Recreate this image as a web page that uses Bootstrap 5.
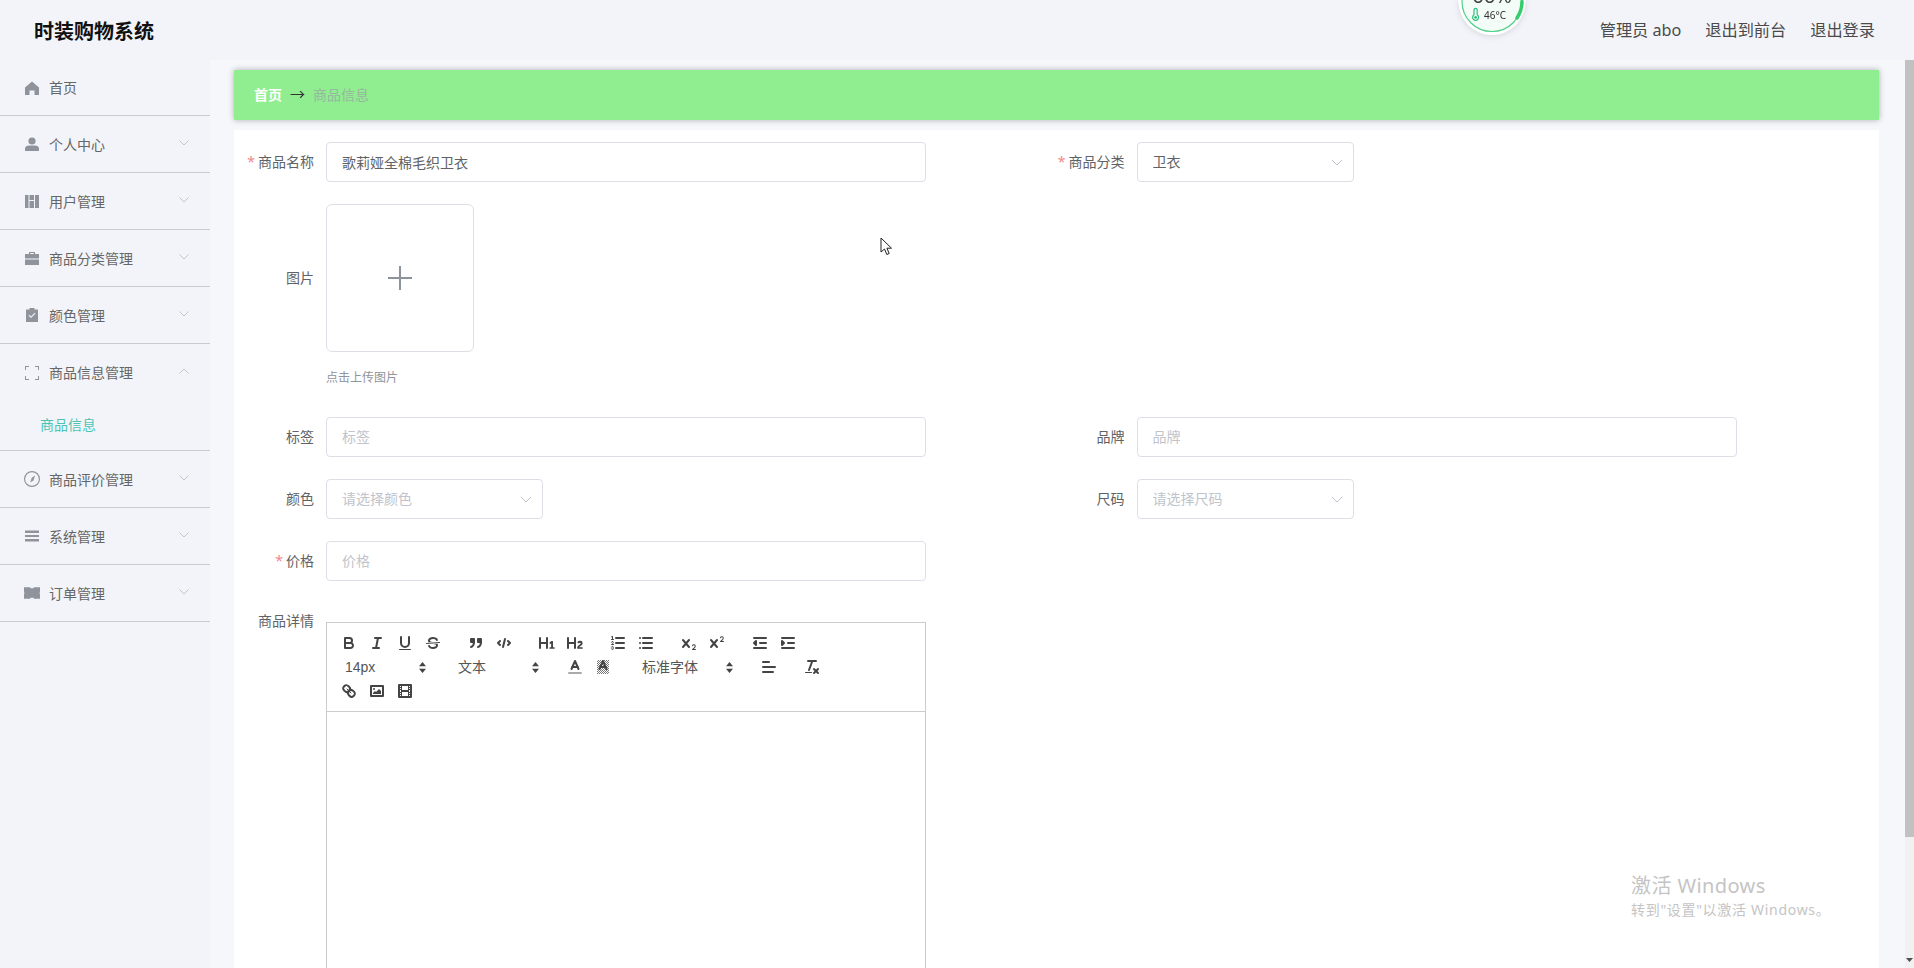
<!DOCTYPE html>
<html lang="zh-CN">
<head>
  <meta charset="UTF-8" />
  <title>时装购物系统</title>
  <link href="https://cdn.jsdelivr.net/npm/bootstrap@5.3.0/dist/css/bootstrap.min.css" rel="stylesheet" />
  <style>
    html, body { height: 100%; overflow: hidden; }
    body { font-family: "Noto Sans", "Noto Sans CJK SC", sans-serif; font-size: 14px; color: #606266; background: #f3f4f9; }

    .top-bar { height: 60px; padding-left: 34px; padding-right: 39px; background: #f3f4f9; }
    .brand-name { font-size: 20px; font-weight: 700; color: #111; padding-top: 3px; }
    .top-links { gap: 24px; font-size: 16.2px; color: #4a4a4a; }
    .temp-widget { position: absolute; left: 1457px; top: 0; width: 70px; height: 40px; filter: drop-shadow(0 1px 3px rgba(0,0,0,.12)); }

    .shell { height: calc(100vh - 60px); }
    .side-menu { width: 210px; flex: none; }
    .menu-row { height: 57px; padding: 0 21px 0 25px; border-bottom: 1px solid #c9cbd0; color: #666; }
    .menu-row.first-row { height: 56px; }
    .menu-row.open-row { height: 107px; padding: 0; display: block; }
    .open-head { height: 57px; padding: 0 21px 0 25px; }
    .sub-row { height: 49px; padding-left: 40px; padding-bottom: 2px; color: #4cc4b4; }
    .menu-icon { width: 14px; height: 14px; margin-right: 10px; fill: #8f939b; flex: none; }
    .wide-icon { width: 16px; height: 16px; margin-left: -1px; margin-right: 9px; }
    .menu-caret { width: 10px; height: 6px; margin-left: auto; margin-top: -3px; fill: none; stroke: #c0c4cc; stroke-width: 1; }

    .main-pane { overflow: hidden; padding: 10px 26px 10px 24px; background: #f5f7fb; min-width: 0; }
    .page-scroll { width: 9px; flex: none; background: #f1f1f1; }
    .page-scroll-thumb { height: 777px; background: #c1c1c1; }
    .page-scroll-down { width: 7px; height: 4px; margin-bottom: 6px; fill: #505050; }

    .crumb-bar { height: 50px; padding-left: 20px; padding-bottom: 2px; gap: 8px; background: #90ee90; box-shadow: 0 0 6px rgba(0,0,0,.3); margin-bottom: 10px; }
    .crumb-home { color: #fff; font-weight: 700; }
    .crumb-arrow { color: #303133; font-size: 15px; line-height: 1; }
    .crumb-here { color: #96b89e; }

    .form-panel { background: #fff; padding: 12px; }
    .field-row { margin-bottom: 22px; }
    .field-line { display: flex; }
    .field-label { width: 80px; flex: none; padding-right: 12px; text-align: right; line-height: 40px; color: #606266; }
    .req-star { color: #f08a8a; margin-right: 3px; }
    .field-input, .field-select { height: 40px; font-size: 14px; color: #606266; border: 1px solid #dcdfe6; border-radius: 4px; padding: 0 15px 1px; }
    .field-input { width: 600px; }
    .field-select {
      width: 217px;
      background-position: right 10px center;
      background-size: 12px 12px;
      background-image: url("data:image/svg+xml,%3csvg xmlns='http://www.w3.org/2000/svg' viewBox='0 0 12 12'%3e%3cpath d='M1 4l5 5 5-5' fill='none' stroke='%23c0c4cc'/%3e%3c/svg%3e");
    }
    .field-input::placeholder { color: #c0c4cc; }
    .select-empty { color: #c0c4cc; }

    .upload-label { line-height: 148px; }
    .upload-box { width: 148px; height: 148px; border: 1px solid #dcdfe6; border-radius: 6px; }
    .upload-box svg { width: 24px; height: 24px; stroke: #8c939d; stroke-width: 2; }
    .upload-hint { font-size: 12px; line-height: 20px; color: #8f939b; margin-top: 16px; margin-bottom: 29px; }

    .detail-label { line-height: 36px; }
    .editor-wrap { width: 600px; margin-top: 19px; }
    .editor-bar { border: 1px solid #ccc; padding: 8px; line-height: 0; }
    .editor-group { display: inline-flex; margin-right: 15px; vertical-align: top; }
    .editor-btn { width: 28px; height: 24px; padding: 3px 5px; border: 0; background: none; display: block; }
    .editor-btn svg { display: block; width: 18px; height: 18px; }
    .editor-bar line, .editor-bar path.ln, .editor-bar polyline, .editor-bar rect.ln { fill: none; stroke: #444; stroke-width: 2; stroke-linecap: round; stroke-linejoin: round; }
    .editor-bar .fl { fill: #444; }
    .editor-bar .thin { stroke-width: 1 !important; }
    .editor-bar polyline.ff, .editor-bar rect.ff { fill: #444; }
    .editor-bar path.ff { fill: none; }
    .editor-bar .color-mark { stroke: #aaa; }
    .editor-pick { width: 98px; height: 24px; padding-left: 10px; padding-right: 7px; font-family: "Liberation Sans", "Noto Sans CJK SC", sans-serif; font-size: 14px; line-height: 24px; color: #555; }
    .editor-pick.wide-pick { width: 108px; }
    .editor-pick svg { width: 7px; height: 11px; fill: #444; }
    .editor-body { border: 1px solid #ccc; border-top: 0; height: 400px; }

    .os-mark { position: absolute; left: 1631px; top: 872px; color: #c4c4c4; pointer-events: none; }
    .os-mark-big { font-size: 20px; line-height: 28px; letter-spacing: .4px; }
    .os-mark-small { font-size: 14px; line-height: 20px; letter-spacing: .7px; }
    .mouse-arrow { position: absolute; left: 880px; top: 237px; width: 14px; height: 19px; }
  </style>
</head>
<body>
  <!-- Header -->
  <header class="top-bar d-flex align-items-center justify-content-between">
    <div class="brand-name">时装购物系统</div>
    <div class="top-links d-flex">
      <span>管理员 abo</span>
      <span>退出到前台</span>
      <span>退出登录</span>
    </div>
  </header>

  <svg class="temp-widget" viewBox="0 0 70 40">
    <circle cx="35" cy="1.5" r="33.5" fill="#fff"/>
    <circle cx="35" cy="1.5" r="30" fill="#f4fcf7" stroke="#4fd08a" stroke-width="1.2"/>
    <path d="M65 1.5A30 30 0 0 1 60 18" fill="none" stroke="#35cd6c" stroke-width="3.5" stroke-linecap="round"/>
    <text x="35" y="3" text-anchor="middle" font-family="Noto Sans, sans-serif" font-size="20" fill="#444">66%</text>
    <path d="M17 10a1.600 1.600 0 0 1 3.200 0v4.800a3 3 0 1 1-3.200 0z" fill="none" stroke="#2fbf7f" stroke-width="1.200"/>
    <circle cx="18.600" cy="17.400" r="1.400" fill="#2fbf7f"/>
    <text x="27" y="19" font-family="Noto Sans, sans-serif" font-size="10" fill="#333">46°C</text>
  </svg>

  <div class="shell d-flex">
    <!-- Sidebar -->
    <aside class="side-menu">
      <div class="menu-row first-row d-flex align-items-center">
        <svg class="menu-icon" viewBox="0 0 14 14"><path d="M7 .5L0 6.500V14h4.500V9.500h5V14H14V6.500z"/></svg>
        首页
      </div>
      <div class="menu-row d-flex align-items-center">
        <svg class="menu-icon" viewBox="0 0 14 14"><circle cx="7" cy="4" r="3.600"/><path d="M0 14v-2.500C0 9.500 2 8.500 4 8.500h6c2 0 4 1 4 3V14z"/></svg>
        个人中心
        <svg class="menu-caret" viewBox="0 0 10 6"><path d="M.5.500L5 5 9.500.5"/></svg>
      </div>
      <div class="menu-row d-flex align-items-center">
        <svg class="menu-icon" viewBox="0 0 14 14"><path d="M0 1h3.500v13H0zM4.500 7H9v7H4.500zM4.500 1H9v5H4.500zM10 1h4v13h-4z"/></svg>
        用户管理
        <svg class="menu-caret" viewBox="0 0 10 6"><path d="M.5.500L5 5 9.500.5"/></svg>
      </div>
      <div class="menu-row d-flex align-items-center">
        <svg class="menu-icon" viewBox="0 0 14 14"><path d="M4 3V1h6v2h4v4.500H0V3zM5.200 3h3.600V2H5.200zM0 8.500h14V14H0z"/></svg>
        商品分类管理
        <svg class="menu-caret" viewBox="0 0 10 6"><path d="M.5.500L5 5 9.500.5"/></svg>
      </div>
      <div class="menu-row d-flex align-items-center">
        <svg class="menu-icon" viewBox="0 0 14 14"><path fill-rule="evenodd" d="M4.500 0h5v1.500H13V14H1V1.500h3.500zM3.500 7.500L6 10l4.500-4.500-.8-.8L6 8.400 4.300 6.700z"/></svg>
        颜色管理
        <svg class="menu-caret" viewBox="0 0 10 6"><path d="M.5.500L5 5 9.500.5"/></svg>
      </div>
      <div class="menu-row open-row">
        <div class="open-head d-flex align-items-center">
          <svg class="menu-icon" viewBox="0 0 14 14"><path d="M0 0h4v1H1v3H0zM10 0h4v4h-1V1h-3zM0 10h1v3h3v1H0zM13 10h1v4h-4v-1h3z"/></svg>
          商品信息管理
          <svg class="menu-caret" viewBox="0 0 10 6"><path d="M.5 5.500L5 1l4.500 4.500"/></svg>
        </div>
        <div class="sub-row d-flex align-items-center">商品信息</div>
      </div>
      <div class="menu-row d-flex align-items-center">
        <svg class="menu-icon wide-icon" viewBox="0 0 14 14"><path fill-rule="evenodd" d="M7 0a7 7 0 1 1 0 14A7 7 0 0 1 7 0zm0 1a6 6 0 1 0 0 12A6 6 0 0 0 7 1zM9.600 4L8.300 8.300 5.600 9.900 5.500 9.700 6.800 6z"/></svg>
        商品评价管理
        <svg class="menu-caret" viewBox="0 0 10 6"><path d="M.5.500L5 5 9.500.5"/></svg>
      </div>
      <div class="menu-row d-flex align-items-center">
        <svg class="menu-icon" viewBox="0 0 14 14"><path d="M0 1.500h14v2.500H0zM0 6h14v2H0zM0 10h14v2.500H0z"/></svg>
        系统管理
        <svg class="menu-caret" viewBox="0 0 10 6"><path d="M.5.500L5 5 9.500.5"/></svg>
      </div>
      <div class="menu-row d-flex align-items-center">
        <svg class="menu-icon wide-icon" viewBox="0 0 14 14"><path d="M0 2h5.500v.8h3V2H14v3.600a3 3 0 0 0 0 2.800V12H8.500v-.8h-3v.8H0V8.400a3 3 0 0 0 0-2.800z"/></svg>
        订单管理
        <svg class="menu-caret" viewBox="0 0 10 6"><path d="M.5.500L5 5 9.500.5"/></svg>
      </div>
    </aside>

    <!-- Main -->
    <main class="main-pane flex-fill">
      <div class="crumb-bar d-flex align-items-center">
        <span class="crumb-home">首页</span>
        <span class="crumb-arrow">→</span>
        <span class="crumb-here">商品信息</span>
      </div>

      <form class="form-panel">
        <div class="row g-0 field-row">
          <div class="col-6 field-line">
            <label class="field-label"><span class="req-star">*</span>商品名称</label>
            <input class="form-control field-input" value="歌莉娅全棉毛织卫衣" />
          </div>
          <div class="col-6 field-line">
            <label class="field-label"><span class="req-star">*</span>商品分类</label>
            <select class="form-select field-select"><option>卫衣</option></select>
          </div>
        </div>

        <div class="field-line">
          <label class="field-label upload-label">图片</label>
          <div>
            <div class="upload-box d-flex align-items-center justify-content-center">
              <svg viewBox="0 0 24 24"><path d="M0 12h24M12 0v24" fill="none"/></svg>
            </div>
            <div class="upload-hint">点击上传图片</div>
          </div>
        </div>

        <div class="row g-0 field-row">
          <div class="col-6 field-line">
            <label class="field-label">标签</label>
            <input class="form-control field-input" placeholder="标签" />
          </div>
          <div class="col-6 field-line">
            <label class="field-label">品牌</label>
            <input class="form-control field-input" placeholder="品牌" />
          </div>
        </div>

        <div class="row g-0 field-row">
          <div class="col-6 field-line">
            <label class="field-label">颜色</label>
            <select class="form-select field-select select-empty"><option>请选择颜色</option></select>
          </div>
          <div class="col-6 field-line">
            <label class="field-label">尺码</label>
            <select class="form-select field-select select-empty"><option>请选择尺码</option></select>
          </div>
        </div>

        <div class="field-row field-line">
          <label class="field-label"><span class="req-star">*</span>价格</label>
          <input class="form-control field-input" placeholder="价格" />
        </div>

        <div class="field-line">
          <label class="field-label detail-label">商品详情</label>
          <div class="editor-wrap">
            <div class="editor-bar">
              <span class="editor-group">
                <button type="button" class="editor-btn"><svg viewBox="0 0 18 18"><path class="ln" d="M5,4H9.5A2.5,2.5,0,0,1,12,6.500v0A2.500,2.500,0,0,1,9.500,9H5V4Z"/><path class="ln" d="M5,9h5.500A2.500,2.500,0,0,1,13,11.500v0A2.500,2.500,0,0,1,10.500,14H5V9Z"/></svg></button>
                <button type="button" class="editor-btn"><svg viewBox="0 0 18 18"><line x1="7" x2="13" y1="4" y2="4"/><line x1="5" x2="11" y1="14" y2="14"/><line x1="8" x2="10" y1="14" y2="4"/></svg></button>
                <button type="button" class="editor-btn"><svg viewBox="0 0 18 18"><path class="ln" d="M5,3V9a4.012,4.012,0,0,0,4,4H9a4.012,4.012,0,0,0,4-4V3"/><rect class="fl" height="1" rx=".5" ry=".5" width="12" x="3" y="15"/></svg></button>
                <button type="button" class="editor-btn"><svg viewBox="0 0 18 18"><line class="thin" x1="15.500" x2="2.500" y1="8.500" y2="9.500"/><path class="fl" d="M9.007,8C6.542,7.791,6,7.519,6,6.500,6,5.792,7.283,5,9,5c1.571,0,2.765.679,2.969,1.309a1,1,0,0,0,1.900-.617C13.356,4.106,11.354,3,9,3,6.200,3,4,4.538,4,6.500a3.200,3.200,0,0,0,.5,1.843Z"/><path class="fl" d="M8.984,10C11.457,10.208,12,10.479,12,11.500c0,.708-1.283,1.500-3,1.500-1.571,0-2.765-.679-2.969-1.309a1,1,0,1,0-1.900.617C4.644,13.894,6.646,15,9,15c2.800,0,5-1.538,5-3.500a3.200,3.200,0,0,0-.5-1.843Z"/></svg></button>
              </span><span class="editor-group">
                <button type="button" class="editor-btn"><svg viewBox="0 0 18 18"><rect class="ln ff" height="3" width="3" x="4" y="5"/><rect class="ln ff" height="3" width="3" x="11" y="5"/><path class="ln ff" d="M7,8c0,4.031-3,5-3,5"/><path class="ln ff" d="M14,8c0,4.031-3,5-3,5"/></svg></button>
                <button type="button" class="editor-btn"><svg viewBox="0 0 18 18"><polyline points="5 7 3 9 5 11"/><polyline points="13 7 15 9 13 11"/><line x1="10" x2="8" y1="5" y2="13"/></svg></button>
              </span><span class="editor-group">
                <button type="button" class="editor-btn"><svg viewBox="0 0 18 18"><path class="fl" d="M10,4V14a1,1,0,0,1-2,0V10H3v4a1,1,0,0,1-2,0V4A1,1,0,0,1,3,4V8H8V4a1,1,0,0,1,2,0Zm6.068,9.209H14.990V7.599a.541.541,0,0,0-.605-.605h-.627a1.011,1.011,0,0,0-.748.297L11.645,8.566a.544.544,0,0,0-.022.858l.286.308a.539.539,0,0,0,.847.033l.099-.088a1.214,1.214,0,0,0,.242-.353h.022s-.011.309-.011.605V13.209H12.041a.541.541,0,0,0-.605.605v.44a.541.541,0,0,0,.605.605h4.027a.541.541,0,0,0,.605-.605v-.44A.541.541,0,0,0,16.068,13.209Z"/></svg></button>
                <button type="button" class="editor-btn"><svg viewBox="0 0 18 18"><path class="fl" d="M16.740,13.814v.44a.541.541,0,0,1-.605.605H11.855a.584.584,0,0,1-.649-.605V14.013c0-2.905,3.399-3.422,3.399-4.555a.777.777,0,0,0-.847-.781,1.177,1.177,0,0,0-.836.385c-.275.264-.561.374-.858.132l-.429-.341c-.308-.242-.385-.518-.154-.814a2.972,2.972,0,0,1,2.454-1.177,2.454,2.454,0,0,1,2.684,2.409c0,2.453-3.179,2.927-3.278,3.938h2.794A.541.541,0,0,1,16.740,13.814ZM9,3A1,1,0,0,0,8,4V8H3V4A1,1,0,0,0,1,4V14a1,1,0,0,0,2,0V10H8v4a1,1,0,0,0,2,0V4A1,1,0,0,0,9,3Z"/></svg></button>
              </span><span class="editor-group">
                <button type="button" class="editor-btn"><svg viewBox="0 0 18 18"><line x1="7" x2="15" y1="4" y2="4"/><line x1="7" x2="15" y1="9" y2="9"/><line x1="7" x2="15" y1="14" y2="14"/><line class="thin" x1="2.500" x2="4.500" y1="5.500" y2="5.500"/><path class="fl" d="M3.500,6A.5.5,0,0,1,3,5.500V3.085l-.276.138A.5.5,0,0,1,2.053,3c-.124-.247-.023-.324.224-.447l1-.5A.5.5,0,0,1,4,2.500v3A.5.5,0,0,1,3.500,6Z"/><path class="ln thin" d="M4.500,10.500h-2c0-.234,1.850-1.076,1.850-2.234A.959.959,0,0,0,2.500,8.156"/><path class="ln thin" d="M2.500,14.846a.959.959,0,0,0,1.850-.109A.7.7,0,0,0,3.750,14a.688.688,0,0,0,.6-.736,.959.959,0,0,0-1.850-.109"/></svg></button>
                <button type="button" class="editor-btn"><svg viewBox="0 0 18 18"><line x1="6" x2="15" y1="4" y2="4"/><line x1="6" x2="15" y1="9" y2="9"/><line x1="6" x2="15" y1="14" y2="14"/><line x1="3" x2="3" y1="4" y2="4"/><line x1="3" x2="3" y1="9" y2="9"/><line x1="3" x2="3" y1="14" y2="14"/></svg></button>
              </span><span class="editor-group">
                <button type="button" class="editor-btn"><svg viewBox="0 0 18 18"><line x1="3" x2="9" y1="6" y2="13"/><line x1="9" x2="3" y1="6" y2="13"/><path class="fl" d="M15.500,15H13.861a3.858,3.858,0,0,0,1.914-2.975,1.800,1.800,0,0,0-1.600-1.751A1.921,1.921,0,0,0,12.021,11.700a.5.5,0,1,0,.957.291,.914.914,0,0,1,1.053-.725,.81.81,0,0,1,.744.762c0,1.076-1.170,1.870-1.940,2.431A1.456,1.456,0,0,0,12,15.500a.5.5,0,0,0,.5.5h3a.5.5,0,0,0,0-1Z"/></svg></button>
                <button type="button" class="editor-btn"><svg viewBox="0 0 18 18"><line x1="3" x2="9" y1="6" y2="13"/><line x1="9" x2="3" y1="6" y2="13"/><path class="fl" d="M15.500,7H13.861a4.015,4.015,0,0,0,1.914-2.975,1.800,1.800,0,0,0-1.600-1.751A1.922,1.922,0,0,0,12.021,3.700a.5.5,0,1,0,.957.291,.917.917,0,0,1,1.053-.725,.81.81,0,0,1,.744.762c0,1.077-1.164,1.925-1.934,2.486A1.423,1.423,0,0,0,12,7.500a.5.5,0,0,0,.5.5h3a.5.5,0,0,0,0-1Z"/></svg></button>
              </span><span class="editor-group">
                <button type="button" class="editor-btn"><svg viewBox="0 0 18 18"><line x1="3" x2="15" y1="14" y2="14"/><line x1="3" x2="15" y1="4" y2="4"/><line x1="9" x2="15" y1="9" y2="9"/><polyline class="ff" points="5 7 5 11 3 9 5 7"/></svg></button>
                <button type="button" class="editor-btn"><svg viewBox="0 0 18 18"><line x1="3" x2="15" y1="14" y2="14"/><line x1="3" x2="15" y1="4" y2="4"/><line x1="9" x2="15" y1="9" y2="9"/><polyline class="ff" points="3 7 3 11 5 9 3 7"/></svg></button>
              </span><br />
              <span class="editor-group">
                <span class="editor-pick d-flex align-items-center justify-content-between">14px<svg viewBox="0 0 7 11"><path d="M3.500 0L7 4.300H0zM3.500 11L0 6.700h7z"/></svg></span>
              </span><span class="editor-group">
                <span class="editor-pick d-flex align-items-center justify-content-between">文本<svg viewBox="0 0 7 11"><path d="M3.500 0L7 4.300H0zM3.500 11L0 6.700h7z"/></svg></span>
              </span><span class="editor-group">
                <button type="button" class="editor-btn"><svg viewBox="0 0 18 18"><line class="color-mark" x1="3" x2="15" y1="15" y2="15"/><polyline points="5.500 11 9 3 12.500 11"/><line x1="11.630" x2="6.380" y1="9" y2="9"/></svg></button>
                <button type="button" class="editor-btn"><svg viewBox="0 0 18 18"><defs><pattern id="hatchDots" width="2" height="2" patternUnits="userSpaceOnUse"><rect width="1" height="1" fill="#777"/><rect x="1" y="1" width="1" height="1" fill="#777"/></pattern></defs><rect x="3" y="2" width="12" height="14" fill="url(#hatchDots)"/><polyline points="5.500 11 9 3 12.500 11"/><line x1="11.630" x2="6.380" y1="9" y2="9"/></svg></button>
              </span><span class="editor-group">
                <span class="editor-pick wide-pick d-flex align-items-center justify-content-between">标准字体<svg viewBox="0 0 7 11"><path d="M3.500 0L7 4.300H0zM3.500 11L0 6.700h7z"/></svg></span>
              </span><span class="editor-group">
                <button type="button" class="editor-btn"><svg viewBox="0 0 18 18"><line x1="3" x2="15" y1="9" y2="9"/><line x1="3" x2="13" y1="14" y2="14"/><line x1="3" x2="9" y1="4" y2="4"/></svg></button>
              </span><span class="editor-group">
                <button type="button" class="editor-btn"><svg viewBox="0 0 18 18"><line x1="5" x2="13" y1="3" y2="3"/><line x1="6" x2="9.350" y1="12" y2="3"/><line x1="11" x2="15" y1="11" y2="15"/><line x1="15" x2="11" y1="11" y2="15"/><rect class="fl" height="1" rx=".5" ry=".5" width="7" x="2" y="14"/></svg></button>
              </span><br />
              <span class="editor-group">
                <button type="button" class="editor-btn"><svg viewBox="0 0 18 18"><line class="thin" x1="7" x2="11" y1="7" y2="11"/><path class="ln" d="M8.900,4.577a3.476,3.476,0,0,1,.36,4.679A3.476,3.476,0,0,1,4.577,8.900C3.185,7.500,2.035,6.400,4.217,4.217S7.500,3.185,8.900,4.577Z"/><path class="ln" d="M13.423,9.100a3.476,3.476,0,0,0-4.679-.36,3.476,3.476,0,0,0,.36,4.679c1.392,1.392,2.500,2.542,4.679.36S14.815,10.500,13.423,9.100Z"/></svg></button>
                <button type="button" class="editor-btn"><svg viewBox="0 0 18 18"><rect class="ln" height="10" width="12" x="3" y="4"/><circle class="fl" cx="6" cy="7" r="1"/><path class="fl" d="M5 12V11L7 9l1 1 3-3 2 2v3z"/></svg></button>
                <button type="button" class="editor-btn"><svg viewBox="0 0 18 18"><rect class="ln" height="12" width="12" x="3" y="3"/><path class="fl" d="M5 3h1v12H5zM12 3h1v12h-1zM5 8h8v2H5zM3 5h3v1H3zM3 7h3v1H3zM3 10h3v1H3zM3 12h3v1H3zM12 5h3v1h-3zM12 7h3v1h-3zM12 10h3v1h-3zM12 12h3v1h-3z"/></svg></button>
              </span>
            </div>
            <div class="editor-body"></div>
          </div>
        </div>
      </form>
    </main>

    <!-- Scrollbar of the main pane, drawn because the browser hides its own -->
    <div class="page-scroll d-flex flex-column align-items-center justify-content-between">
      <div class="page-scroll-thumb w-100"></div>
      <svg class="page-scroll-down" viewBox="0 0 7 4"><path d="M0 0h7L3.500 4z"/></svg>
    </div>
  </div>

  <!-- Things lying over the page -->
  <div class="os-mark">
    <div class="os-mark-big">激活 Windows</div>
    <div class="os-mark-small">转到"设置"以激活 Windows。</div>
  </div>
  <svg class="mouse-arrow" viewBox="0 0 14 19"><path d="M1 1v14l3.500-3 2.300 5.500 2.400-1-2.300-5.300H11.500z" fill="#fff" stroke="#222" stroke-width="1"/></svg>
</body>
</html>
